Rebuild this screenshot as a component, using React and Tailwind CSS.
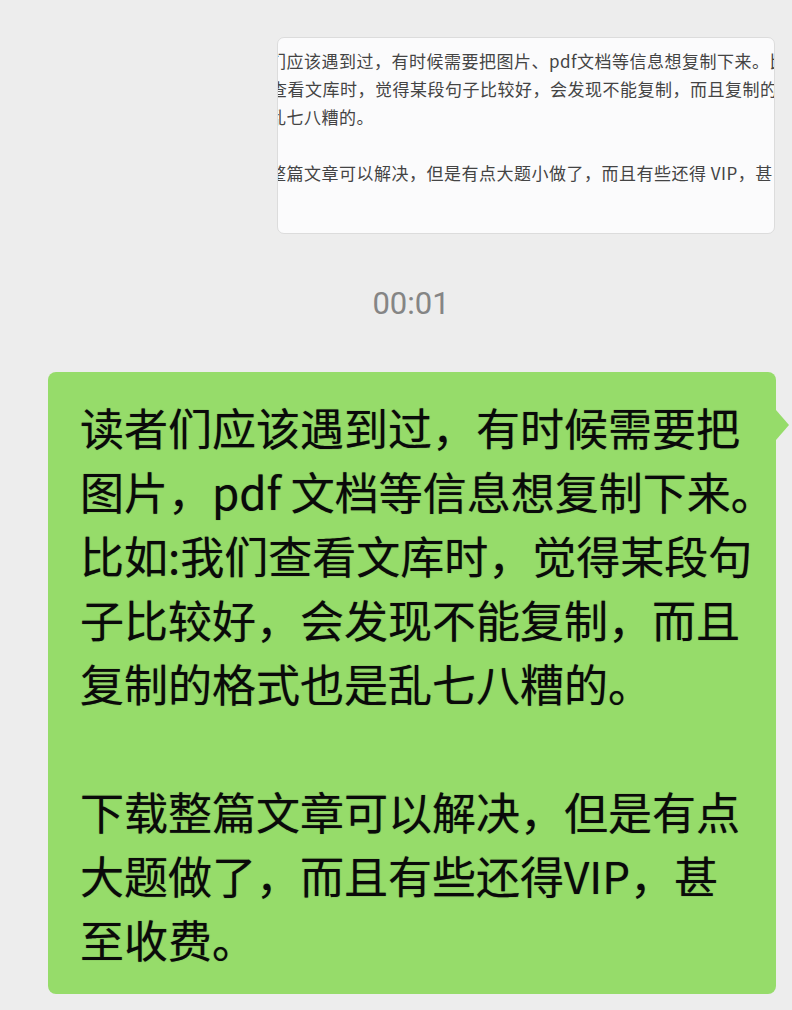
import React from "react";

const cjk = { fontFamily: '"Noto Sans CJK SC", "Noto Sans", sans-serif' };

const shotLines = [
  { text: "们应该遇到过，有时候需要把图片、pdf文档等信息想复制下来。比", cls: "-ml-[9px]" },
  { text: "查看文库时，觉得某段句子比较好，会发现不能复制，而且复制的", cls: "-ml-[8px]" },
  { text: "乱七八糟的。", cls: "-ml-[9px]" },
  { text: "\u00a0", cls: "" },
  { text: "整篇文章可以解决，但是有点大题小做了，而且有些还得 VIP，甚", cls: "-ml-[9px]" },
];

const bubbleLines = [
  "读者们应该遇到过，有时候需要把",
  "图片，pdf 文档等信息想复制下来。",
  "比如:我们查看文库时，觉得某段句",
  "子比较好，会发现不能复制，而且",
  "复制的格式也是乱七八糟的。",
  "\u00a0",
  "下载整篇文章可以解决，但是有点",
  "大题做了，而且有些还得VIP，甚",
  "至收费。",
];

function ScreenshotBubble() {
  return (
    <div className="self-end mr-[17px] w-[498px] h-[197px] bg-[#fbfbfc] border border-[#dcdcdc] rounded-[7px] overflow-hidden pt-[9px]">
      {shotLines.map((line, i) => (
        <div
          key={i}
          className={`whitespace-nowrap text-[17px] leading-[28px] tracking-[0.5px] text-[#444444] ${line.cls}`}
          style={cjk}
        >
          {line.text}
        </div>
      ))}
    </div>
  );
}

export default function App() {
  return (
    <div className="w-[792px] h-[1010px] bg-[#ededed] flex flex-col overflow-hidden pt-[37px]">
      <ScreenshotBubble />

      {/* time divider */}
      <div
        className="mt-[50px] pl-[30px] text-center text-[31px] leading-[40px] text-[#858585]"
        style={{ fontFamily: 'Roboto, "Noto Sans", sans-serif' }}
      >
        00:01
      </div>

      {/* outgoing message */}
      <div className="relative mt-[48px] ml-[48px] w-[728px] bg-[#96dc6a] rounded-[8px] pl-[32px] pr-[20px] py-[23px]">
        {bubbleLines.map((line, i) => (
          <div
            key={i}
            className="whitespace-nowrap text-[44px] leading-[64px] text-[#0a0a0a] [text-shadow:0_0_1px_rgba(0,0,0,0.5)]"
            style={cjk}
          >
            {line}
          </div>
        ))}
        <div className="absolute top-[38px] -right-[13px] w-0 h-0 border-y-[15px] border-y-transparent border-l-[13px] border-l-[#96dc6a]" />
      </div>
    </div>
  );
}
